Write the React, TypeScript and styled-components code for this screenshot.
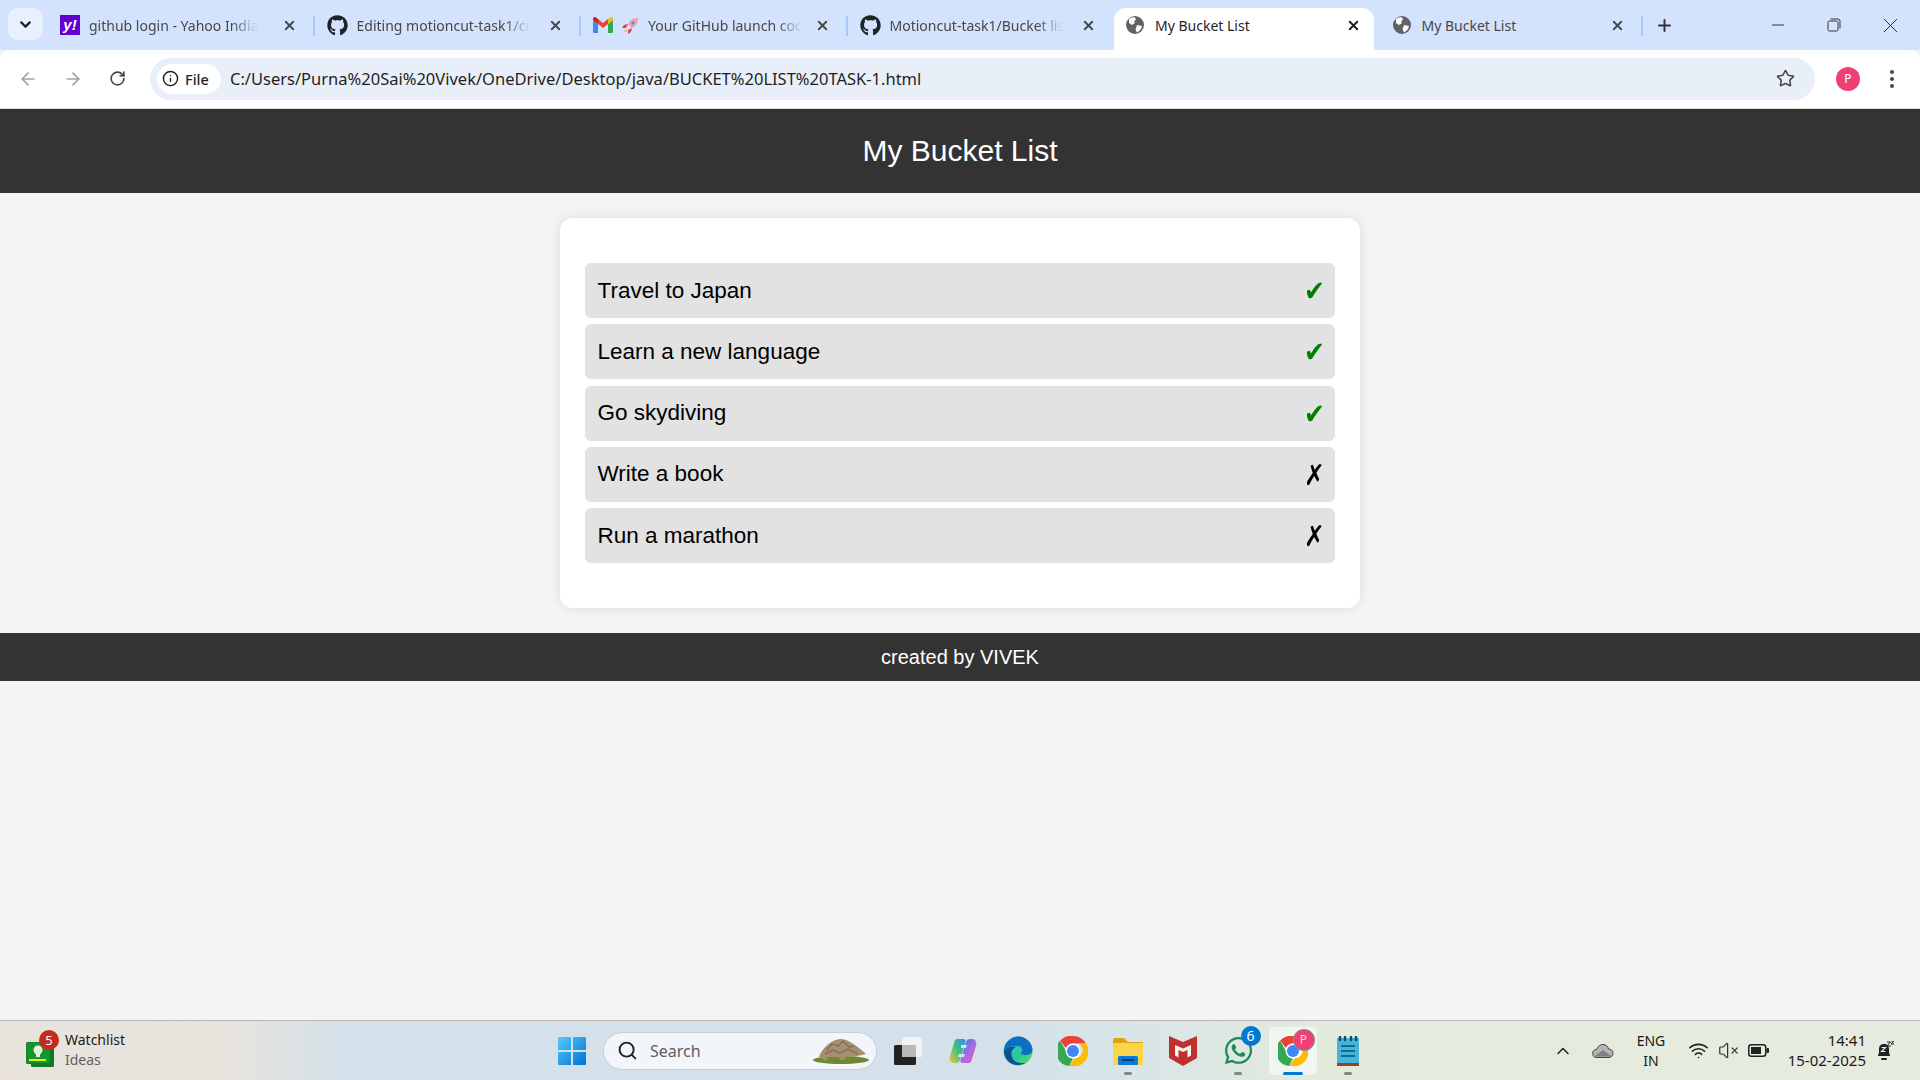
import styled, { createGlobalStyle } from "styled-components";
import { ChevronDown, ArrowLeft, ArrowRight, RotateCw, Info, Star, X, Plus, Search, ChevronUp, VolumeX, Wifi } from "lucide-react";
import { FaGithub, FaWhatsapp } from "react-icons/fa";

const tabs = [
  { title: "github login - Yahoo India", icon: "yahoo", width: 266.5 },
  { title: "Editing motioncut-task1/cr", icon: "github", width: 266.5 },
  { title: "Your GitHub launch coc", icon: "gmail", width: 266.5 },
  { title: "Motioncut-task1/Bucket lis", icon: "github", width: 266.5 },
  { title: "My Bucket List", icon: "globe", active: true, width: 260 },
  { title: "My Bucket List", icon: "globe", width: 262 },
];

const bucketItems = [
  { text: "Travel to Japan", done: true },
  { text: "Learn a new language", done: true },
  { text: "Go skydiving", done: true },
  { text: "Write a book", done: false },
  { text: "Run a marathon", done: false },
];

export default function App() {
  return (
    <>
      <GlobalStyle />
      <Screen>
        <TabStrip>
          <TabSearch>
            <ChevronDown size={17} strokeWidth={3} />
          </TabSearch>
          {tabs.map((tab, i) => (
            <Tab key={i} $active={!!tab.active} $separator={i < 3 || i === 5} $width={tab.width}>
              <TabFavicon name={tab.icon} />
              <TabTitle $active={!!tab.active} $fade={i < 4}>{tab.title}</TabTitle>
              <X size={15} strokeWidth={3} color={tab.active ? "#1f1f1f" : "#474747"} />
            </Tab>
          ))}
          <NewTab>
            <Plus size={19} strokeWidth={2.5} />
          </NewTab>
          <WindowControls>
            <WindowButton>
              <svg width="14" height="14" viewBox="0 0 14 14"><path d="M1 7h12" stroke="#333" strokeWidth="1" /></svg>
            </WindowButton>
            <WindowButton>
              <svg width="14" height="14" viewBox="0 0 14 14" fill="none" stroke="#333" strokeWidth="1">
                <rect x="1" y="3" width="10" height="10" rx="1.5" />
                <path d="M3.5 1h7.5a2 2 0 0 1 2 2v7.5" />
              </svg>
            </WindowButton>
            <WindowButton>
              <svg width="15" height="15" viewBox="0 0 15 15"><path d="M1 1l13 13M14 1L1 14" stroke="#333" strokeWidth="1" /></svg>
            </WindowButton>
          </WindowControls>
        </TabStrip>

        <Toolbar>
          <NavButton $dim><ArrowLeft size={20} strokeWidth={2} /></NavButton>
          <NavButton $dim><ArrowRight size={20} strokeWidth={2} /></NavButton>
          <NavButton><RotateCw size={17} strokeWidth={2.4} /></NavButton>
          <AddressBar>
            <FileChip>
              <Info size={17} strokeWidth={2} />
              <span>File</span>
            </FileChip>
            <Url>C:/Users/Purna%20Sai%20Vivek/OneDrive/Desktop/java/BUCKET%20LIST%20TASK-1.html</Url>
            <Star size={19} strokeWidth={2} color="#474747" />
          </AddressBar>
          <Avatar>P</Avatar>
          <MenuDots>
            <i /><i /><i />
          </MenuDots>
        </Toolbar>

        <Page>
          <Header>My Bucket List</Header>
          <Card>
            <BucketList>
              {bucketItems.map((item) => (
                <BucketRow key={item.text}>
                  {item.text}
                  <Mark $done={item.done}>{item.done ? "✔" : "✗"}</Mark>
                </BucketRow>
              ))}
            </BucketList>
          </Card>
          <Footer>created by VIVEK</Footer>
        </Page>

        <Taskbar>
          <Widget>
            <WidgetIcon>
              <svg width="28" height="26" viewBox="0 0 28 26">
                <rect x="0" y="1" width="24" height="22" rx="1.5" fill="#118a2c" />
                <rect x="5" y="4" width="23" height="22" rx="1.5" fill="#0f7a28" />
                <rect x="2" y="2" width="22" height="20" fill="#14962f" />
                <circle cx="12" cy="9" r="4.5" fill="#e6f3dc" />
                <rect x="10" y="13" width="4" height="3" fill="#e6f3dc" />
                <rect x="3" y="18" width="17" height="2" fill="#e6ea1c" />
              </svg>
              <WidgetBadge>5</WidgetBadge>
            </WidgetIcon>
            <WidgetText>
              <strong>Watchlist</strong>
              <span>Ideas</span>
            </WidgetText>
          </Widget>

          <TaskIcons>
            <TaskSlot>
              <svg width="30" height="30" viewBox="0 0 30 30">
                <defs>
                  <linearGradient id="win" x1="0" y1="0" x2="1" y2="1">
                    <stop offset="0" stopColor="#52cdfb" />
                    <stop offset="1" stopColor="#0070d2" />
                  </linearGradient>
                </defs>
                <path d="M1 2a1 1 0 0 1 1-1h12v13H1zM16 1h12a1 1 0 0 1 1 1v12H16zM1 16h13v13H2a1 1 0 0 1-1-1zM16 16h13v12a1 1 0 0 1-1 1H16z" fill="url(#win)" />
              </svg>
            </TaskSlot>
            <SearchBox>
              <Search size={21} strokeWidth={2.2} color="#222" />
              <span>Search</span>
              <svg width="56" height="26" viewBox="0 0 56 26">
                <ellipse cx="28" cy="22" rx="28" ry="4" fill="#6f8a2c" />
                <path d="M6 19C8 12 17 2 27 1c9 0 18 8 26 15-7 2-14 3-20 3l-2 3h-4l-1-3H15l-1 3h-4l-1-3z" fill="#a68f70" />
                <path d="M14 12l5-6 6 2 5-5 6 6 6-1" stroke="#7d6a50" strokeWidth="1.2" fill="none" />
                <path d="M12 16l8-4 7 3 8-4 10 5" stroke="#7d6a50" strokeWidth="1.2" fill="none" />
              </svg>
            </SearchBox>
            <TaskSlot>
              <svg width="30" height="30" viewBox="0 0 30 30">
                <rect x="1" y="9" width="22" height="20" rx="1.5" fill="#222" />
                <rect x="9" y="1" width="20" height="20" rx="1.5" fill="#f2f2f2" />
                <rect x="9" y="9" width="14" height="12" fill="#b9b9b9" />
              </svg>
            </TaskSlot>
            <TaskSlot>
              <svg width="30" height="30" viewBox="0 0 30 30" fill="none">
                <defs>
                  <linearGradient id="cop1" x1="0" y1="1" x2="1" y2="0">
                    <stop offset="0" stopColor="#f6c343" />
                    <stop offset="0.5" stopColor="#3fc37a" />
                    <stop offset="1" stopColor="#2f8fe8" />
                  </linearGradient>
                  <linearGradient id="cop2" x1="0" y1="0" x2="1" y2="1">
                    <stop offset="0" stopColor="#3a7ce8" />
                    <stop offset="0.6" stopColor="#b36be0" />
                    <stop offset="1" stopColor="#f0568c" />
                  </linearGradient>
                </defs>
                <path d="M9 3h6c2 0 3 1 2.500 2.500L12 24c-.5 2-2 3-4 3H6c-4 0-5-4-4-7l4-13c.5-2 1.500-4 3-4z" fill="url(#cop1)" />
                <path d="M21 27h-6c-2 0-3-1-2.500-2.500L18 6c.5-2 2-3 4-3h2c4 0 5 4 4 7l-4 13c-.5 2-1.500 4-3 4z" fill="url(#cop2)" />
                <path d="M13 9h6l-1 3h-5zM11 18h6l-1 3h-6z" fill="#e8eef2" opacity=".85" />
              </svg>
            </TaskSlot>
            <TaskSlot>
              <svg width="30" height="30" viewBox="0 0 30 30">
                <defs>
                  <linearGradient id="edge1" x1="0" y1="0" x2="1" y2="1">
                    <stop offset="0" stopColor="#35c1f1" />
                    <stop offset="0.6" stopColor="#2bc79a" />
                    <stop offset="1" stopColor="#66e05d" />
                  </linearGradient>
                </defs>
                <circle cx="15" cy="15" r="14.500" fill="url(#edge1)" />
                <path d="M1 14C2 5 10 .5 15 .5 24 .5 29.500 8 29.500 14c0 3-3 5-7 5-3 0-5-1-4.500-2 2-2 1.500-7-3.500-7C8 10 3 12 1 14z" fill="#0d6fc4" />
                <path d="M1 15c0 8 6 14 14 14 3 0 6-1 8-2.500-7 2-14-1-14.500-8C8 15 10 12 13 11 7 10 2 12 1 15z" fill="#11508f" />
              </svg>
            </TaskSlot>
            <TaskSlot>
              <ChromeIcon />
            </TaskSlot>
            <TaskSlot $running>
              <svg width="30" height="28" viewBox="0 0 30 28">
                <path d="M0 3a2 2 0 0 1 2-2h9l4 4h15v6H0z" fill="#dfa40d" />
                <rect x="0" y="6" width="30" height="22" rx="1" fill="#fbd44e" />
                <rect x="5" y="19" width="20" height="9" rx="1.500" fill="#0a78d4" />
                <rect x="9" y="22" width="12" height="2" fill="#053f75" />
              </svg>
            </TaskSlot>
            <TaskSlot>
              <svg width="28" height="30" viewBox="0 0 28 30">
                <path d="M0 0l14 6 14-6v22l-14 8L0 22z" fill="#c0302f" />
                <path d="M6 9l8 3.500L22 9v10.500l-3.500 2V14L14 16l-4.500-2v7.500l-3.500-2z" fill="#f5f3ea" />
              </svg>
            </TaskSlot>
            <TaskSlot $running>
              <FaWhatsapp size={31} color="#1f8a57" />
              <CountBadge>6</CountBadge>
            </TaskSlot>
            <TaskSlot $active>
              <ChromeIcon />
              <ProfileBadge>P</ProfileBadge>
            </TaskSlot>
            <TaskSlot $running>
              <svg width="22" height="30" viewBox="0 0 22 30">
                <rect x="0" y="2" width="22" height="26" fill="#48b4d8" />
                <rect x="0" y="27" width="22" height="3" fill="#8d4a1f" />
                <path d="M4 10h14M4 15h14M4 20h14" stroke="#0b6d94" strokeWidth="2" />
                <path d="M3 1v3M8 1v3M14 1v3M19 1v3" stroke="#0b4f6d" strokeWidth="2.500" strokeLinecap="round" />
              </svg>
            </TaskSlot>
          </TaskIcons>

          <Tray>
            <TraySlot $width={40}><ChevronUp size={20} strokeWidth={1.8} color="#222" /></TraySlot>
            <TraySlot $width={40}>
              <svg width="22" height="14" viewBox="0 0 22 14">
                <path d="M5 13.500a4 4 0 0 1-.5-8C6 2 8.500.500 11 .500c3 0 5 2 5.500 4.500a4 4 0 0 1 .5 8.500z" fill="#b5b5b5" stroke="#444" strokeWidth="1" />
                <path d="M2 12.500L11 6l9 6.500z" fill="#808080" />
              </svg>
            </TraySlot>
            <Language>
              <span>ENG</span>
              <span>IN</span>
            </Language>
            <TraySlot $width={30}><Wifi size={21} strokeWidth={1.8} color="#222" /></TraySlot>
            <TraySlot $width={30}><VolumeX size={21} strokeWidth={1.4} color="#333" /></TraySlot>
            <TraySlot $width={30}>
              <svg width="21" height="13" viewBox="0 0 21 13">
                <rect x=".75" y=".75" width="17" height="11.500" rx="2.500" fill="none" stroke="#222" strokeWidth="1.500" />
                <rect x="3" y="3" width="10" height="7" fill="#222" />
                <rect x="18.500" y="4" width="2.500" height="5" rx="1" fill="#222" />
              </svg>
            </TraySlot>
            <Clock>
              <span>14:41</span>
              <span>15-02-2025</span>
            </Clock>
            <TraySlot $width={30}>
              <svg width="18" height="20" viewBox="0 0 18 20">
                <path d="M2 14c1-1 1-3 1-6 0-3 2-5 5-5s5 2 5 5c0 3 0 5 1 6v1H2z" fill="#222" />
                <rect x="5" y="17" width="6" height="2" rx="1" fill="#222" />
                <path d="M5.500 6.500h4l-4 4h4" stroke="#e6ecdf" strokeWidth="1.200" fill="none" />
                <path d="M11 1h3.500L11 5h4M15 0h3l-3 3h3" stroke="#222" strokeWidth="1" fill="none" />
              </svg>
            </TraySlot>
          </Tray>
        </Taskbar>
      </Screen>
    </>
  );
}

function TabFavicon({ name }: { name: string }) {
  if (name === "yahoo") return <YahooMark>y!</YahooMark>;
  if (name === "github") return <FaGithub size={21} color="#1f2328" />;
  if (name === "globe") {
    return (
      <svg width="18" height="18" viewBox="0 0 18 18" style={{ flexShrink: 0, margin: "0 2px 0 0" }}>
        <circle cx="9" cy="9" r="9" fill="#5f6368" />
        <path d="M3 3c2-1 4-2 6-1.500l1 2.500-2 1 1 2-3 2-3-2zM11 9l5 1c-.500 3-2 5-5 6.500l-1.500-3z" fill="#fff" />
      </svg>
    );
  }
  return (
    <>
      <svg width="20" height="16" viewBox="0 0 20 16" style={{ flexShrink: 0 }}>
        <path d="M0 3v11.500A1.500 1.500 0 0 0 1.500 16H5V7z" fill="#4285f4" />
        <path d="M15 7v9h3.500a1.500 1.500 0 0 0 1.500-1.500V3z" fill="#34a853" />
        <path d="M0 3l5 4v-5L3 .5C1.500-.5 0 .5 0 2z" fill="#c5221f" />
        <path d="M5 2v5l5 4 5-4V2l-5 4z" fill="#ea4335" />
        <path d="M15 2v5l5-4V2c0-1.500-1.500-2.500-3-1.500z" fill="#fbbc04" />
      </svg>
      <svg width="17" height="17" viewBox="0 0 17 17" style={{ flexShrink: 0 }}>
        <path d="M16 1c-5 0-8 2-10 6l4 4c4-2 6-5 6-10z" fill="#f0a0a8" />
        <path d="M6 7L2 8 0 11h4zM10 11l-1 4-3 2v-4z" fill="#e0444f" />
        <path d="M4 12l-3 4 4-2z" fill="#f5b342" />
        <circle cx="11" cy="6" r="1.500" fill="#4a90d9" />
      </svg>
    </>
  );
}

function ChromeIcon() {
  return (
    <svg width="30" height="30" viewBox="0 0 30 30">
      <path d="M15 0a15 15 0 0 1 13 7.500H15a7.500 7.500 0 0 0-7 4.500L2 4.800A15 15 0 0 1 15 0z" fill="#ea4335" />
      <path d="M2 4.800L8.500 16a7.500 7.500 0 0 0 6.500 6.500L11 30A15 15 0 0 1 2 4.800z" fill="#34a853" />
      <path d="M28 7.500A15 15 0 0 1 11 30l6-8a7.500 7.500 0 0 0 3-14.500z" fill="#fbbc04" />
      <circle cx="15" cy="15" r="7.500" fill="#fff" />
      <circle cx="15" cy="15" r="6" fill="#4285f4" />
    </svg>
  );
}

const GlobalStyle = createGlobalStyle`
  html, body {
    margin: 0;
    padding: 0;
    background: #f4f4f4;
  }
  * {
    box-sizing: border-box;
  }
`;

const uiFont = `"Noto Sans", "Open Sans", sans-serif`;

const Screen = styled.div`
  width: 1920px;
  height: 1080px;
  display: flex;
  flex-direction: column;
  overflow: hidden;
  font-family: ${uiFont};
`;

const TabStrip = styled.div`
  height: 50px;
  flex-shrink: 0;
  display: flex;
  align-items: flex-end;
  padding-left: 8px;
  background: #d3e3fd;
`;

const TabSearch = styled.div`
  width: 35px;
  height: 32px;
  margin: 0 5px 10px 0;
  border-radius: 10px;
  background: #e9f0fd;
  color: #1f1f1f;
  display: flex;
  align-items: center;
  justify-content: center;
`;

const Tab = styled.div<{ $active: boolean; $separator: boolean; $width: number }>`
  position: relative;
  width: ${(p) => p.$width}px;
  margin-right: ${(p) => (p.$active ? "6.5px" : "0")};
  height: 42px;
  flex-shrink: 0;
  display: flex;
  align-items: center;
  gap: 9px;
  padding: 0 ${(p) => (p.$active ? "13px" : "18px")} 8px 12px;
  border-radius: 12px 12px 0 0;
  background: ${(p) => (p.$active ? "#fff" : "transparent")};

  &::after {
    content: "";
    display: ${(p) => (p.$separator ? "block" : "none")};
    position: absolute;
    right: 0;
    top: 8px;
    width: 2px;
    height: 20px;
    background: #a8c7fa;
  }
`;

const TabTitle = styled.span<{ $active: boolean; $fade: boolean }>`
  margin-right: auto;
  white-space: nowrap;
  font-size: 14px;
  color: ${(p) => (p.$active ? "#1f1f1f" : "#474747")};
  mask-image: ${(p) => (p.$fade ? "linear-gradient(90deg, #000 84%, transparent 100%)" : "none")};
`;

const YahooMark = styled.span`
  width: 20px;
  height: 20px;
  flex-shrink: 0;
  background: #6001d2;
  color: #fff;
  font: italic bold 15px/19px "Liberation Sans", sans-serif;
  text-align: center;
`;

const NewTab = styled.div`
  width: 44px;
  height: 42px;
  padding-bottom: 8px;
  display: flex;
  align-items: center;
  justify-content: center;
  color: #333;
`;

const WindowControls = styled.div`
  margin-left: auto;
  height: 50px;
  padding-right: 2px;
  display: flex;
  align-self: flex-start;
`;

const WindowButton = styled.div`
  width: 56px;
  height: 50px;
  display: flex;
  align-items: center;
  justify-content: center;
`;

const Toolbar = styled.div`
  height: 59px;
  flex-shrink: 0;
  display: flex;
  align-items: center;
  padding: 0 20px 1px 5px;
  background: #fff;
  border-radius: 10px 10px 0 0;
  border-bottom: 1px solid #d9d9d9;
`;

const NavButton = styled.div<{ $dim?: boolean }>`
  width: 45px;
  height: 36px;
  display: flex;
  align-items: center;
  justify-content: center;
  color: ${(p) => (p.$dim ? "#a3a3a3" : "#474747")};
`;

const AddressBar = styled.div`
  width: 1665px;
  height: 42px;
  margin-left: 10px;
  padding: 0 20px 0 7px;
  display: flex;
  align-items: center;
  border-radius: 21px;
  background: #e9eff9;
`;

const FileChip = styled.div`
  width: 64px;
  height: 30px;
  flex-shrink: 0;
  padding-left: 5px;
  display: flex;
  align-items: center;
  gap: 6px;
  border-radius: 15px;
  background: #fff;
  font-size: 14.5px;
  font-weight: 500;
  color: #1f1f1f;
`;

const Url = styled.div`
  flex: 1;
  margin-left: 9px;
  font-size: 16.5px;
  color: #1f1f1f;
  white-space: nowrap;
`;

const Avatar = styled.div`
  width: 24px;
  height: 24px;
  margin-left: 21px;
  flex-shrink: 0;
  border-radius: 50%;
  background: #ee3f77;
  color: #fff;
  font-size: 12px;
  text-align: center;
  line-height: 24px;
`;

const MenuDots = styled.div`
  margin-left: 30px;
  display: flex;
  flex-direction: column;
  gap: 3px;

  i {
    width: 4px;
    height: 4px;
    border-radius: 50%;
    background: #474747;
  }
`;

const Page = styled.main`
  flex: 1;
  min-height: 0;
  display: flex;
  flex-direction: column;
  background: #f4f4f4;
  font-family: "Liberation Sans", Arial, sans-serif;
`;

const Header = styled.h1`
  margin: 0;
  height: 84px;
  flex-shrink: 0;
  background: #333;
  color: #fff;
  font-size: 30px;
  font-weight: 400;
  line-height: 84px;
  text-align: center;
`;

const Card = styled.section`
  width: 800px;
  margin: 25px auto;
  padding: 45px 25px;
  border-radius: 12.5px;
  background: #fff;
  box-shadow: 0 0 12px rgba(0, 0, 0, 0.1);
`;

const BucketList = styled.ul`
  list-style: none;
  margin: 0;
  padding: 0;
  display: flex;
  flex-direction: column;
  gap: 6.25px;
`;

const BucketRow = styled.li`
  height: 55px;
  padding: 0 0 0 12.5px;
  display: flex;
  align-items: center;
  justify-content: space-between;
  border-radius: 6px;
  background: #e2e2e2;
  color: #000;
  font-size: 22.5px;
`;

const Mark = styled.span<{ $done: boolean }>`
  width: 31px;
  padding-top: 2px;
  font-family: "DejaVu Sans", sans-serif;
  font-size: 25px;
  transform: scaleY(1.15);
  color: ${(p) => (p.$done ? "#008000" : "#000")};
`;

const Footer = styled.footer`
  height: 48px;
  flex-shrink: 0;
  background: #333;
  color: #fff;
  font-size: 20px;
  line-height: 48px;
  text-align: center;
`;

const Taskbar = styled.footer`
  height: 60px;
  flex-shrink: 0;
  display: grid;
  grid-template-columns: 1fr auto 1fr;
  align-items: center;
  border-top: 1px solid #b7b8b6;
  background: linear-gradient(90deg, #e9e3dc 0, #e6e3dd 12%, #d5e1ea 18%, #d4e1ea 52%, #d8e5e8 58%, #e3ebdc 70%, #e6ecdf 100%);
`;

const Widget = styled.div`
  display: flex;
  align-items: center;
  gap: 11px;
  padding-left: 26px;
`;

const WidgetIcon = styled.div`
  position: relative;
  width: 28px;
  height: 26px;
  margin-top: 6px;
`;

const WidgetBadge = styled.span`
  position: absolute;
  left: 13px;
  top: -11px;
  width: 20px;
  height: 20px;
  border-radius: 50%;
  background: #c42b1c;
  color: #fff;
  font-size: 13px;
  line-height: 20px;
  text-align: center;
`;

const WidgetText = styled.div`
  display: flex;
  flex-direction: column;
  margin-top: -2px;
  font-size: 14px;
  line-height: 20px;

  strong {
    font-weight: 400;
    color: #1a1a1a;
  }
  span {
    color: #5f5f5f;
  }
`;

const TaskIcons = styled.div`
  display: flex;
  align-items: center;
`;

const TaskSlot = styled.div<{ $active?: boolean; $running?: boolean }>`
  position: relative;
  width: 55px;
  height: 48px;
  display: flex;
  align-items: center;
  justify-content: center;

  &::before {
    content: "";
    display: ${(p) => (p.$active ? "block" : "none")};
    position: absolute;
    inset: 0 3.5px;
    z-index: 0;
    border-radius: 5px;
    background: rgba(255, 255, 255, 0.55);
  }

  svg {
    position: relative;
  }

  &::after {
    content: "";
    display: ${(p) => (p.$active || p.$running ? "block" : "none")};
    position: absolute;
    left: 50%;
    bottom: 0;
    transform: translateX(-50%);
    width: ${(p) => (p.$active ? "20px" : "8px")};
    height: 3px;
    border-radius: 2px;
    background: ${(p) => (p.$active ? "#0078d4" : "#858585")};
  }
`;

const SearchBox = styled.div`
  width: 274px;
  height: 38px;
  margin: 0 3.5px;
  padding: 0 7px 0 13px;
  display: flex;
  align-items: center;
  gap: 12px;
  border-radius: 19px;
  background: #f2f6fa;
  border: 1px solid #c5ced6;
  font-size: 16px;
  color: #5d5d5d;

  span {
    flex: 1;
  }
`;

const CountBadge = styled.span`
  position: absolute;
  left: 30px;
  top: -1px;
  width: 20px;
  height: 20px;
  border-radius: 50%;
  background: #0078d4;
  color: #fff;
  font-size: 14px;
  line-height: 20px;
  text-align: center;
`;

const ProfileBadge = styled.span`
  position: absolute;
  left: 28px;
  top: 3px;
  width: 20px;
  height: 20px;
  border-radius: 50%;
  background: #ee3f77;
  box-shadow: 0 0 0 1px #8c8c8c;
  color: #f9cfdc;
  font-size: 12px;
  line-height: 20px;
  text-align: center;
`;

const Tray = styled.div`
  display: flex;
  align-items: center;
  justify-content: flex-end;
  padding-right: 20px;
  color: #1a1a1a;
`;

const TraySlot = styled.div<{ $width: number }>`
  width: ${(p) => p.$width}px;
  display: flex;
  align-items: center;
  justify-content: center;
`;

const Language = styled.div`
  width: 56px;
  margin-right: 4px;
  display: flex;
  flex-direction: column;
  align-items: center;
  font-size: 14px;
  line-height: 20px;
`;

const Clock = styled.div`
  width: 97px;
  padding-right: 4px;
  margin-top: -2px;
  display: flex;
  flex-direction: column;
  align-items: flex-end;
  font-size: 15px;
  line-height: 20px;
`;
